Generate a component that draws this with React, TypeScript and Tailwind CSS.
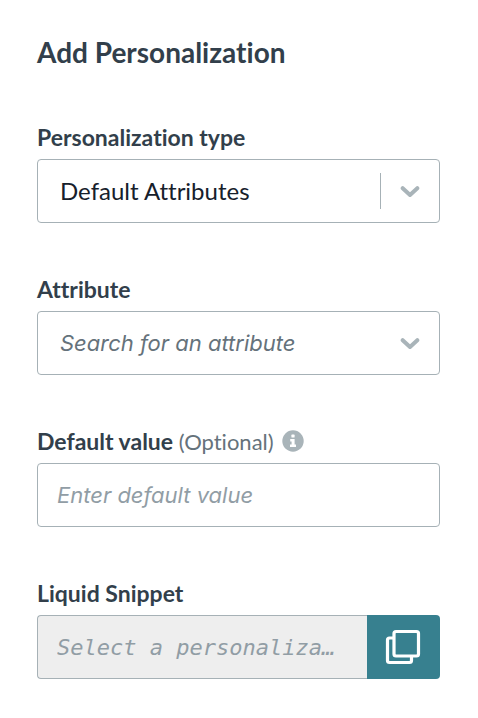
import React from "react";

const field =
  "h-16 w-full rounded-[4px] border border-[#a6b1b6] bg-white outline-none";

const placeholder =
  "font-['Inter',sans-serif] text-[22px] placeholder:italic";

function Chevron() {
  return (
    <svg width="20" height="14" viewBox="0 0 20 14" fill="none" aria-hidden="true">
      <path
        d="M2.700 4.200 10 11l7.300-6.800"
        stroke="#a9b4b9"
        strokeWidth="4"
        strokeLinecap="round"
        strokeLinejoin="round"
      />
    </svg>
  );
}

function InfoIcon() {
  return (
    <svg width="22" height="22" viewBox="0 0 22 22" aria-hidden="true">
      <circle cx="11" cy="11" r="10.7" fill="#a9b4b9" />
      <rect x="9.4" y="4.6" width="3.2" height="3" rx="0.6" fill="#fff" />
      <path d="M8.2 9h4.4v5.6H14V17H8v-2.4h1.6v-3.2H8.2z" fill="#fff" />
    </svg>
  );
}

function CopyIcon() {
  return (
    <svg
      width="36"
      height="36"
      viewBox="0 0 36 36"
      fill="none"
      stroke="#fff"
      strokeWidth="3.2"
      strokeLinejoin="round"
      aria-hidden="true"
    >
      <rect x="9" y="2.500" width="24.500" height="24.500" rx="2" />
      <path d="M9 9H4.500a2 2 0 0 0-2 2V31.500A2 2 0 0 0 4.500 33.500H24.500A2 2 0 0 0 26.500 31.500V27" />
    </svg>
  );
}

function Label({ htmlFor, children }: { htmlFor: string; children: React.ReactNode }) {
  return (
    <label htmlFor={htmlFor} className="text-[23px] leading-[22px] font-bold">
      {children}
    </label>
  );
}

export default function App() {
  return (
    <main className="min-h-screen bg-white pt-9 pr-[38px] pb-10 pl-[37px] font-['Lato',sans-serif] text-[#323f4b] [font-variant-ligatures:none]">
      <h1 className="text-[28px] leading-8 font-bold">Add Personalization</h1>
      <form className="mt-[58px] flex flex-col gap-[55px]">
        <div className="flex flex-col gap-[11px]">
          <Label htmlFor="type">Personalization type</Label>
          <div className="grid items-center">
            <select
              id="type"
              className={`${field} col-start-1 row-start-1 appearance-none px-[22px] text-[24px] text-[#16202b]`}
            >
              <option>Default Attributes</option>
            </select>
            <span className="pointer-events-none col-start-1 row-start-1 mr-5 flex h-9 items-center justify-self-end border-l border-[#a6b1b6] pl-[19px]">
              <Chevron />
            </span>
          </div>
        </div>

        <div className="flex flex-col gap-[11px]">
          <Label htmlFor="attribute">Attribute</Label>
          <div className="grid items-center">
            <input
              id="attribute"
              type="text"
              role="combobox"
              aria-expanded="false"
              aria-controls="attribute"
              placeholder="Search for an attribute"
              className={`${field} ${placeholder} col-start-1 row-start-1 pr-16 pl-[22px] placeholder:text-[#65727b]`}
            />
            <span className="pointer-events-none col-start-1 row-start-1 mr-5 justify-self-end">
              <Chevron />
            </span>
          </div>
        </div>

        <div className="flex flex-col gap-[11px]">
          <div className="flex h-[22px] items-center gap-2">
            <Label htmlFor="default-value">
              Default value{" "}
              <span className="text-[22px] font-normal text-[#65727b]">(Optional)</span>
            </Label>
            <button type="button" aria-label="More information">
              <InfoIcon />
            </button>
          </div>
          <input
            id="default-value"
            type="text"
            placeholder="Enter default value"
            className={`${field} ${placeholder} px-[19px] placeholder:text-[#919da5]`}
          />
        </div>

        <div className="flex flex-col gap-[11px]">
          <Label htmlFor="snippet">Liquid Snippet</Label>
          <div className="flex h-16">
            <input
              id="snippet"
              type="text"
              readOnly
              placeholder="Select a personalization"
              className="h-16 min-w-0 flex-1 rounded-l-[4px] border border-r-0 border-[#a6b1b6] bg-[#eeeeee] pr-7 pl-[19px] font-['DejaVu_Sans_Mono',monospace] text-[22px] text-ellipsis outline-none placeholder:text-[#919da5] placeholder:italic"
            />
            <button
              type="button"
              aria-label="Copy snippet"
              className="flex w-[73px] items-center justify-center rounded-r-[4px] bg-[#37808f] pr-0.5"
            >
              <CopyIcon />
            </button>
          </div>
        </div>
      </form>
    </main>
  );
}
